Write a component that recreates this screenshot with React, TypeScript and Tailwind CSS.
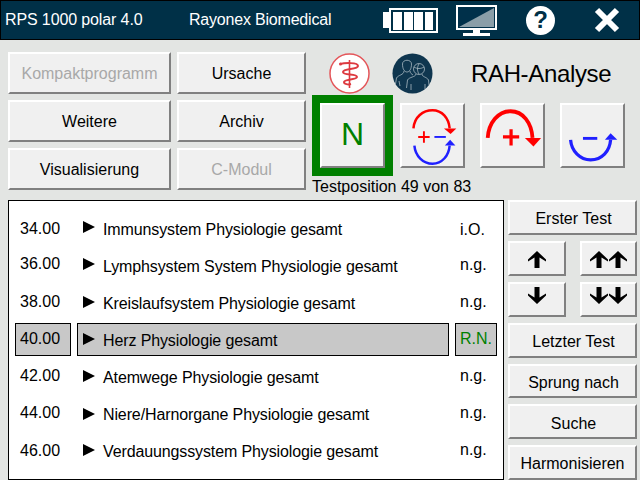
const btn = "flex items-center justify-center bg-[#f0f0f0] border border-solid border-t-2 border-l-2 border-t-white border-l-white border-b-2 border-r-2 border-b-[#808080] border-r-[#808080] text-[16px] leading-none";

function Btn({ label, off, className = "", textClass = "translate-y-[1px]" }: { label: string; off?: boolean; className?: string; textClass?: string }) {
  return <div className={`${btn} ${off ? "text-[#a8a8a8]" : "text-black"} ${className}`}><span className={textClass}>{label}</span></div>;
}

function Battery() {
  return (
    <svg width="56" height="28" viewBox="0 0 56 28" className="block">
      <rect x="0" y="6" width="6" height="16" fill="#fff" />
      <rect x="7" y="3" width="47" height="23" fill="none" stroke="#fff" strokeWidth="2" />
      <rect x="10" y="6" width="9" height="18" fill="#fff" />
      <rect x="21" y="6" width="9" height="18" fill="#fff" />
      <rect x="31" y="6" width="9" height="18" fill="#fff" />
      <rect x="42" y="6" width="8" height="18" fill="#fff" />
    </svg>
  );
}

function Monitor() {
  return (
    <svg width="41" height="31" viewBox="0 0 41 31" className="block">
      <rect x="1" y="1" width="39" height="23" fill="#00304a" stroke="#fff" strokeWidth="2" />
      <polygon points="3,22 38,3 38,22" fill="#8a9ea8" />
      <rect x="17" y="25" width="7" height="3" fill="#fff" />
      <rect x="7" y="28" width="27" height="3" fill="#fff" />
    </svg>
  );
}

function Close() {
  return (
    <svg width="26" height="26" viewBox="0 0 26 26" className="block">
      <path d="M3 3 L23 23 M23 3 L3 23" stroke="#fff" strokeWidth="6" />
    </svg>
  );
}

function Caduceus() {
  return (
    <svg width="41" height="41" viewBox="0 0 41 41" className="block">
      <circle cx="20.5" cy="20.5" r="19.5" fill="#fff" stroke="#e4565a" strokeWidth="1.5" />
      <path d="M20.5 7 V35" stroke="#dd3a40" strokeWidth="1.6" />
      <path d="M11 11 C15 10 29 9 29 13 C29 17 14 15 14 19 C14 23 28 20 28 24 C28 27 15 26 15 29 C15 31 19 32 22 31" fill="none" stroke="#dd3a40" strokeWidth="2" />
      <circle cx="11.5" cy="11" r="1.5" fill="#dd3a40" />
    </svg>
  );
}

function People() {
  return (
    <svg width="41" height="41" viewBox="0 0 41 41" className="block">
      <circle cx="20.5" cy="20.5" r="20" fill="#0f364f" />
      <g fill="none" stroke="#a9b9c2" strokeWidth="0.8">
        <path d="M10.5 11 C10.5 6 19.5 6 19.5 11 C19.5 16 17.5 19 15 19 C12.5 19 10.5 16 10.5 11 Z" />
        <path d="M12 18 C12 22 6 22 4.5 25 L3.5 31 M18 18 C18 20 19.5 21 21 22 M7 28 L8 33" />
        <circle cx="27" cy="16" r="5.5" />
        <path d="M24 21 C24 24 17 24 15.5 27 L14.5 35 M30 21 C30 24 35 24 36.5 27 L37 32 M22 14 C25 16 29 16 32 14 M27 11 C25 14 25 18 27 21 M19 31 L19 37 M33 31 L33 36" />
      </g>
    </svg>
  );
}

function BothArrows() {
  return (
    <svg width="64" height="64" viewBox="0 0 64 64" className="block">
      <path d="M12 24 C13 12 22 5 32 5 C42 5 49 13 50 24" fill="none" stroke="#ff0000" strokeWidth="2.6" />
      <polygon points="44,24 57,24 51,30" fill="#ff0000" />
      <path d="M17 33 H29 M23 27 V39" stroke="#ff0000" strokeWidth="2" />
      <path d="M34 33 H46" stroke="#2020ff" strokeWidth="2" />
      <path d="M13 42 C14 53 22 61 32 61 C42 61 49 53 50 42" fill="none" stroke="#2020ff" strokeWidth="2.6" />
      <polygon points="45,42 56,42 50.5,36" fill="#2020ff" />
    </svg>
  );
}

function PlusArrow() {
  return (
    <svg width="64" height="64" viewBox="0 0 64 64" className="block">
      <path d="M6 34 C7 18 17 6 30 6 C43 6 52 18 53 34" fill="none" stroke="#ff0000" strokeWidth="4" />
      <polygon points="45,34 62,34 54,43" fill="#ff0000" />
      <path d="M22 33 H39 M30.5 25 V42" stroke="#ff0000" strokeWidth="3.4" />
    </svg>
  );
}

function MinusArrow() {
  return (
    <svg width="64" height="64" viewBox="0 0 64 64" className="block">
      <path d="M9 36 C10 48 19 57 30 57 C42 57 50 48 51 36" fill="none" stroke="#2020ff" strokeWidth="3.4" />
      <polygon points="45,36 58,36 51,29" fill="#2020ff" />
      <rect x="22" y="33" width="15" height="3" fill="#2020ff" />
    </svg>
  );
}

function Arrow({ down }: { down?: boolean }) {
  return (
    <svg width="18" height="17" viewBox="0 0 18 17" className={`block ${down ? "rotate-180 -translate-y-[4px]" : "translate-y-[1px]"}`}>
      <path d="M9 0 L18 8.5 L18 10.5 L11.5 6.5 L11.5 17 L6.5 17 L6.5 6.5 L0 10.5 L0 8.5 Z" fill="#000" />
    </svg>
  );
}

const rows = [
  { num: "34.00", name: "Immunsystem Physiologie gesamt", status: "i.O.", numTop: "pt-[8px]", triTop: "mt-[8px]", stTop: "pt-[9px]" },
  { num: "36.00", name: "Lymphsystem System Physiologie gesamt", status: "n.g.", numTop: "pt-[6px]", triTop: "mt-[8px]", stTop: "pt-[7px]" },
  { num: "38.00", name: "Kreislaufsystem Physiologie gesamt", status: "n.g.", numTop: "pt-[7px]", triTop: "mt-[9px]", stTop: "pt-[7px]" },
  { num: "40.00", name: "Herz Physiologie gesamt", status: "R.N.", numTop: "pt-[7px]", triTop: "mt-[9px]", stTop: "pt-[7px]" },
  { num: "42.00", name: "Atemwege Physiologie gesamt", status: "n.g.", numTop: "pt-[7px]", triTop: "mt-[9px]", stTop: "pt-[7px]" },
  { num: "44.00", name: "Niere/Harnorgane Physiologie gesamt", status: "n.g.", numTop: "pt-[7px]", triTop: "mt-[10px]", stTop: "pt-[7px]" },
  { num: "46.00", name: "Verdauungssystem Physiologie gesamt", status: "n.g.", numTop: "pt-[8px]", triTop: "mt-[9px]", stTop: "pt-[7px]" },
];

function Row({ r }: { r: (typeof rows)[number] }) {
  const sel = r.status === "R.N.";
  const box = sel ? "bg-[#c8c8c8] border border-black" : "border border-transparent";
  return (
    <div className="flex h-[33px] items-stretch gap-[6px] text-[16px] leading-none text-black">
      <div className={`w-[56px] pl-[4px] ${r.numTop} ${box}`}>{r.num}</div>
      <div className={`flex w-[372px] items-start ${box}`}>
        <svg width="12" height="12" viewBox="0 0 12 12" className={`ml-[5px] shrink-0 ${r.triTop}`}>
          <polygon points="0,0 12,6 0,12" fill="#000" />
        </svg>
        <span className="ml-[8px] mt-[9px] whitespace-nowrap tracking-[-0.12px]">{r.name}</span>
      </div>
      <div className={`w-[42px] pl-[4px] ${r.stTop} ${sel ? "text-[#008000]" : ""} ${box}`}>{r.status}</div>
    </div>
  );
}

export default function App() {
  const side = "translate-y-[2px] translate-x-[1px]";
  return (
    <div className="flex h-[480px] w-[640px] flex-col overflow-hidden bg-[#e3e5e3] font-['Liberation_Sans',Arial,sans-serif]">
      <header className="flex h-[40px] shrink-0 items-center border border-black bg-[#003047] text-[16px] leading-none text-white">
        <span className="ml-[4px] w-[184px] whitespace-nowrap tracking-[-0.12px]">RPS 1000 polar 4.0</span>
        <span className="w-[194px] whitespace-nowrap tracking-[-0.2px]">Rayonex Biomedical</span>
        <Battery />
        <div className="ml-[17px]"><Monitor /></div>
        <div className="ml-[29px] flex h-[29px] w-[29px] items-center justify-center rounded-full bg-white text-[24px] font-bold text-[#003047]">?</div>
        <div className="ml-[39px]"><Close /></div>
      </header>

      <section className="mt-[12px] flex h-[148px] shrink-0 pl-[8px]">
        <div className="grid h-[138px] grid-cols-[163px_129px] grid-rows-3 gap-x-[6px] gap-y-[6px]">
          <Btn label="Kompaktprogramm" off />
          <Btn label="Ursache" />
          <Btn label="Weitere" />
          <Btn label="Archiv" />
          <Btn label="Visualisierung" />
          <Btn label="C-Modul" off />
        </div>
        <div className="ml-[6px] flex flex-col">
          <div className="flex h-[43px] items-center">
            <div className="ml-[17px]"><Caduceus /></div>
            <div className="ml-[22px]"><People /></div>
            <span className="ml-[38px] text-[24px] leading-none tracking-[-0.35px] text-black">RAH-Analyse</span>
          </div>
          <div className="flex items-end">
            <div className="h-[81px] w-[81px] border-[8px] border-[#008000]">
              <div className={`${btn} h-full w-full !text-[32px] text-[#008000]`}><span className="-translate-y-[2px]">N</span></div>
            </div>
            <div className={`${btn} ml-[7px] h-[65px] w-[65px] mb-[8px]`}><BothArrows /></div>
            <div className={`${btn} ml-[15px] h-[65px] w-[65px] mb-[8px]`}><PlusArrow /></div>
            <div className={`${btn} ml-[15px] h-[65px] w-[65px] mb-[8px]`}><MinusArrow /></div>
          </div>
          <div className="mt-[3px] text-[16px] leading-none text-black whitespace-nowrap">Testposition 49 von 83</div>
        </div>
      </section>

      <section className="flex min-h-0 flex-1 pl-[8px]">
        <div className="flex h-[280px] w-[496px] shrink-0 flex-col gap-[4px] border border-black bg-white px-[6px] pt-[11px]">
          {rows.map((r) => <Row key={r.num} r={r} />)}
        </div>
        <div className="ml-[4px] flex w-[129px] shrink-0 flex-col gap-[6px]">
          <Btn label="Erster Test" className="h-[35px]" textClass={side} />
          <div className="grid grid-cols-[58px_57px] justify-between gap-y-[6px]">
            <div className={`${btn} h-[35px]`}><Arrow /></div>
            <div className={`${btn} h-[35px] gap-[1px]`}><Arrow /><Arrow /></div>
            <div className={`${btn} h-[35px]`}><Arrow down /></div>
            <div className={`${btn} h-[35px] gap-[1px]`}><Arrow down /><Arrow down /></div>
          </div>
          <Btn label="Letzter Test" className="h-[35px]" textClass={side} />
          <Btn label="Sprung nach" className="h-[35px]" textClass={side} />
          <Btn label="Suche" className="h-[35px]" textClass={side} />
          <Btn label="Harmonisieren" className="h-[35px]" textClass="translate-y-[1px]" />
        </div>
      </section>
    </div>
  );
}
